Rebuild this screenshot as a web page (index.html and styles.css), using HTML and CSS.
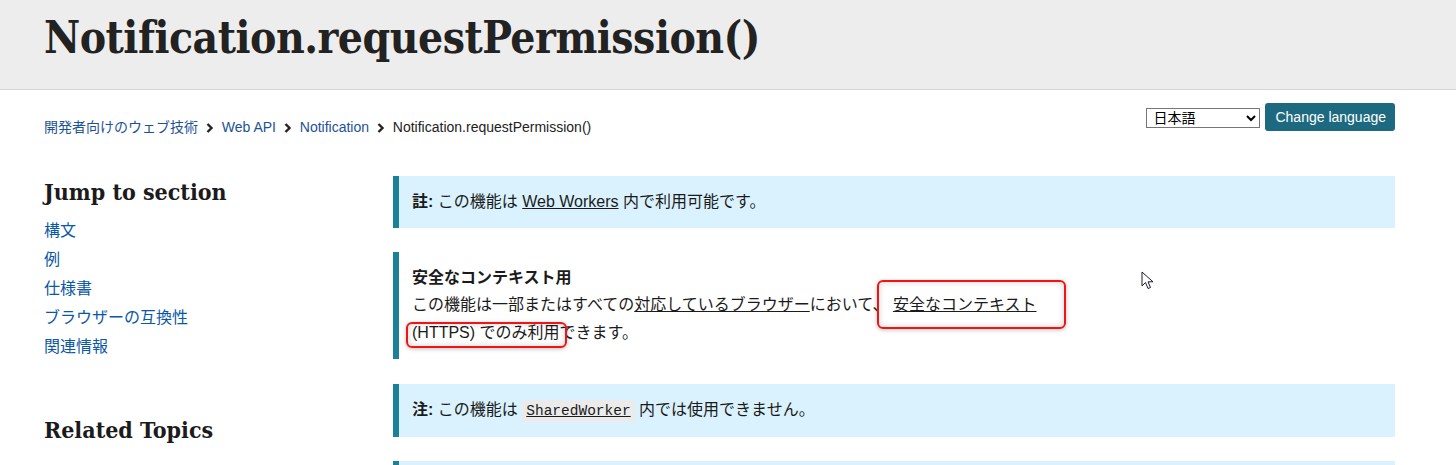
FILE: index.html
```html
<!DOCTYPE html>
<html lang="ja">

<head>
    <meta charset="UTF-8">
    <meta name="viewport" content="width=device-width, initial-scale=1.0">
    <title>Notification.requestPermission() - Web API | MDN</title>
    <link rel="stylesheet" href="styles.css">
</head>

<body>
    <header class="title-bar">
        <h1>Notification.requestPermission()</h1>
    </header>

    <div class="crumb-row">
        <nav class="breadcrumbs">
            <a href="#">開発者向けのウェブ技術</a>
            <svg class="chev" width="8" height="10" viewBox="0 0 8 10"><path d="M1.5 1 L5.5 5 L1.5 9" fill="none" stroke="#222" stroke-width="2.4"/></svg>
            <a href="#">Web API</a>
            <svg class="chev" width="8" height="10" viewBox="0 0 8 10"><path d="M1.5 1 L5.5 5 L1.5 9" fill="none" stroke="#222" stroke-width="2.4"/></svg>
            <a href="#">Notification</a>
            <svg class="chev" width="8" height="10" viewBox="0 0 8 10"><path d="M1.5 1 L5.5 5 L1.5 9" fill="none" stroke="#222" stroke-width="2.4"/></svg>
            <span class="current">Notification.requestPermission()</span>
        </nav>
        <form class="lang-form">
            <select>
                <option>日本語</option>
                <option>English (US)</option>
            </select>
            <button type="button">Change language</button>
        </form>
    </div>

    <div class="page">
        <aside class="sidebar">
            <h2>Jump to section</h2>
            <ul class="toc">
                <li><a href="#">構文</a></li>
                <li><a href="#">例</a></li>
                <li><a href="#">仕様書</a></li>
                <li><a href="#">ブラウザーの互換性</a></li>
                <li><a href="#">関連情報</a></li>
            </ul>
            <h2 class="related">Related Topics</h2>
        </aside>

        <main class="content">
            <div class="notecard note">
                <p><strong>註:</strong> この機能は <a href="#">Web Workers</a> 内で利用可能です。</p>
            </div>

            <div class="notecard secure">
                <h4>安全なコンテキスト用</h4>
                <p>この機能は一部またはすべての<a href="#">対応しているブラウザー</a>において、 <a href="#">安全なコンテキスト</a><br>(HTTPS) でのみ利用できます。</p>
                <span class="mark mark-a"></span>
                <span class="mark mark-b"></span>
                <svg class="cursor" width="14" height="20" viewBox="0 0 14 20">
                    <path d="M1 1 L1 15 L4.5 11.5 L7 17.5 L9.5 16.5 L7 10.8 L12 10.8 Z" fill="#fff" stroke="#1d1d2b" stroke-width="1" stroke-linejoin="round"/>
                </svg>
            </div>

            <div class="notecard note">
                <p><strong>注:</strong> この機能は <a href="#"><code>SharedWorker</code></a> 内では使用できません。</p>
            </div>

            <div class="notecard note last"></div>
        </main>
    </div>
</body>
</html>
```

FILE: styles.css
```css
body {
    margin: 0;
    font-family: "Liberation Sans", Arial, "Noto Sans CJK JP", sans-serif;
    color: #1b1b1b;
    background-color: #fff;
    overflow: hidden;
}

a {
    color: #1b1b1b;
}

.title-bar {
    height: 89px;
    background-color: #ededed;
    border-bottom: 1px solid #d3d9d6;
    padding-left: 44px;
    box-sizing: content-box;
}

.title-bar h1 {
    margin: 0;
    padding-top: 12px;
    font-family: "DejaVu Serif Condensed", "DejaVu Serif", serif;
    font-stretch: condensed;
    font-weight: bold;
    font-size: 44px;
    letter-spacing: -0.5px;
    line-height: 52px;
    color: #222;
}

.crumb-row {
    display: flex;
    justify-content: space-between;
    align-items: flex-start;
    padding: 13px 61px 0 44px;
}

.breadcrumbs {
    padding-top: 14px;
    font-size: 14px;
    line-height: 20px;
}

.breadcrumbs a {
    color: #1c5296;
    text-decoration: none;
}

.breadcrumbs .chev {
    margin: 0 4px 0 4px;
    vertical-align: -1px;
}

.breadcrumbs .current {
    color: #222;
}

.lang-form {
    display: flex;
    align-items: center;
    gap: 5px;
}

.lang-form select {
    width: 114px;
    height: 20px;
    margin-top: 2px;
    font-family: "Liberation Sans", "Noto Sans CJK JP", sans-serif;
    font-size: 14px;
    border: 1px solid #767676;
    border-radius: 0;
    background-color: #fff;
    padding: 0 0 0 2px;
}

.lang-form button {
    height: 28px;
    padding: 0 9px 0 10px;
    font-family: "Liberation Sans", Arial, sans-serif;
    font-size: 14px;
    color: #fff;
    background-color: #1d6a80;
    border: none;
    border-radius: 3px;
}

.page {
    display: flex;
    padding: 39px 61px 0 44px;
}

.sidebar {
    width: 349px;
    flex-shrink: 0;
}

.sidebar h2 {
    margin: 0;
    padding-top: 2px;
    font-family: "DejaVu Serif Condensed", "DejaVu Serif", serif;
    font-stretch: condensed;
    font-weight: bold;
    font-size: 23px;
    line-height: 28px;
    color: #1b1b1b;
}

.toc {
    list-style: none;
    margin: 10px 0 0;
    padding: 0;
}

.toc li {
    font-size: 16px;
    line-height: 29px;
}

.toc a {
    color: #0a58a6;
    text-decoration: none;
}

.sidebar .related {
    margin-top: 53px;
}

.content {
    flex: 1;
}

.notecard {
    position: relative;
    border-left: 6px solid #1a8199;
    padding: 12px 12px 12px 13px;
    margin-bottom: 24px;
    font-size: 16px;
    line-height: 28px;
}

.notecard p {
    margin: 0;
}

.note {
    background-color: #daf2fd;
}

.secure {
    background-color: #fff;
    padding-top: 13px;
    margin-bottom: 25px;
}

.secure h4 {
    margin: 0;
    font-size: 16px;
    line-height: 26px;
}

.notecard code {
    font-family: "Liberation Mono", "DejaVu Sans Mono", monospace;
    font-size: 14.5px;
    background-color: #ebebeb;
    padding: 3px 4px;
}

.last {
    height: 40px;
    margin-top: 0;
}

.mark {
    position: absolute;
    border: 2px solid #f01414;
    border-radius: 6px;
    box-shadow: inset 0 0 6px rgba(0, 0, 0, 0.18), 0 1px 4px rgba(0, 0, 0, 0.25);
}

.mark-a {
    left: 478px;
    top: 28px;
    width: 185px;
    height: 45px;
}

.mark-b {
    left: 7px;
    top: 70px;
    width: 157px;
    height: 22px;
}

.cursor {
    position: absolute;
    left: 742px;
    top: 19px;
}
```
